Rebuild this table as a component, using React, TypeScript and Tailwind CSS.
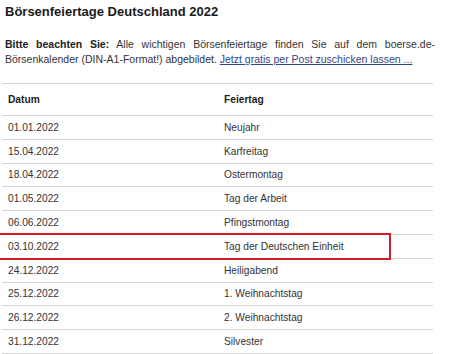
import React from 'react';

const rows: [string, string][] = [
  ['01.01.2022', 'Neujahr'],
  ['15.04.2022', 'Karfreitag'],
  ['18.04.2022', 'Ostermontag'],
  ['01.05.2022', 'Tag der Arbeit'],
  ['06.06.2022', 'Pfingstmontag'],
  ['03.10.2022', 'Tag der Deutschen Einheit'],
  ['24.12.2022', 'Heiligabend'],
  ['25.12.2022', '1. Weihnachtstag'],
  ['26.12.2022', '2. Weihnachtstag'],
  ['31.12.2022', 'Silvester'],
];

export default function App() {
  return (
    <div className="relative w-[456px] h-[354px] overflow-hidden bg-white text-[#333] font-['Liberation_Sans',Arial,sans-serif]">
      <h1 className="pl-[5px] pt-[4px] text-[13px] leading-[16px] font-bold text-[#1a1a1a]">
        Börsenfeiertage Deutschland 2022
      </h1>

      <div className="mt-[17px] pl-[5px] w-[435px] text-[10.5px] leading-[15px]">
        <p className="text-justify [text-align-last:justify]">
          <b className="text-[#222]">Bitte beachten Sie:</b> Alle wichtigen Börsenfeiertage finden Sie auf dem boerse.de-
        </p>
        <p>
          Börsenkalender (DIN-A1-Format!) abgebildet.{' '}
          <a href="#" className="underline text-[#334488]">Jetzt gratis per Post zuschicken lassen ...</a>
        </p>
      </div>

      <div className="mt-[16px] ml-[2px] w-[431px] border-t border-[#d6d6d6] text-[10.2px]">
        <div className="flex h-[32px] items-center border-b border-[#d6d6d6] font-bold text-[#222]">
          <div className="w-[222px] pl-[6px]">Datum</div>
          <div>Feiertag</div>
        </div>
        {rows.map(([date, name]) => (
          <div key={date} className="flex h-[23.8px] items-center border-b border-[#d6d6d6]">
            <div className="w-[222px] pl-[6px]">{date}</div>
            <div>{name}</div>
          </div>
        ))}
      </div>

      {/* highlight marker */}
      <div className="absolute left-[-10px] top-[233px] w-[401px] h-[27px] border-2 border-[#cc2026]" />
    </div>
  );
}
